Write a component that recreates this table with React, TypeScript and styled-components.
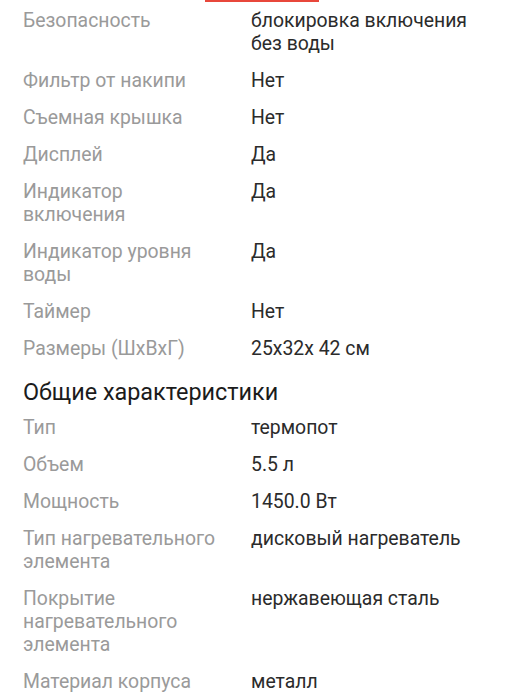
import React from "react";
import styled, { createGlobalStyle } from "styled-components";

const Global = createGlobalStyle`
  html, body { margin: 0; padding: 0; background: #ffffff; }
  body { font-family: Roboto, "Noto Sans", sans-serif; -webkit-font-smoothing: antialiased; }
`;

const Page = styled.div`
  width: 525px;
  background: #fff;
`;

const TabIndicator = styled.div`
  margin-left: 205px;
  width: 114px;
  height: 2px;
  background: #e8473b;
`;

const Section = styled.section`
  padding: 0 23px;
`;

const Heading = styled.h2`
  margin: 0;
  padding: 11px 0 3px;
  font-size: 23.4px;
  line-height: 28px;
  font-weight: 400;
  color: #1b1b1b;
`;

const Row = styled.div`
  display: grid;
  grid-template-columns: 200px 1fr;
  column-gap: 28px;
  padding: 7px 0;
  font-size: 19.4px;
  line-height: 23px;
`;

const Label = styled.div`
  color: #9a9a9a;
`;

const Value = styled.div`
  color: #2b2b2b;
`;

type Spec = [string, string];

const first: Spec[] = [
  ["Безопасность", "блокировка включения без воды"],
  ["Фильтр от накипи", "Нет"],
  ["Съемная крышка", "Нет"],
  ["Дисплей", "Да"],
  ["Индикатор включения", "Да"],
  ["Индикатор уровня воды", "Да"],
  ["Таймер", "Нет"],
  ["Размеры (ШхВхГ)", "25x32x 42 см"],
];

const general: Spec[] = [
  ["Тип", "термопот"],
  ["Объем", "5.5 л"],
  ["Мощность", "1450.0 Вт"],
  ["Тип нагревательного элемента", "дисковый нагреватель"],
  ["Покрытие нагревательного элемента", "нержавеющая сталь"],
  ["Материал корпуса", "металл"],
];

const SpecList = ({ items }: { items: Spec[] }) => (
  <>
    {items.map(([l, v]) => (
      <Row key={l}>
        <Label>{l}</Label>
        <Value>{v}</Value>
      </Row>
    ))}
  </>
);

export default function App() {
  return (
    <Page>
      <Global />
      <TabIndicator />
      <Section>
        <SpecList items={first} />
        <Heading>Общие характеристики</Heading>
        <SpecList items={general} />
      </Section>
    </Page>
  );
}
